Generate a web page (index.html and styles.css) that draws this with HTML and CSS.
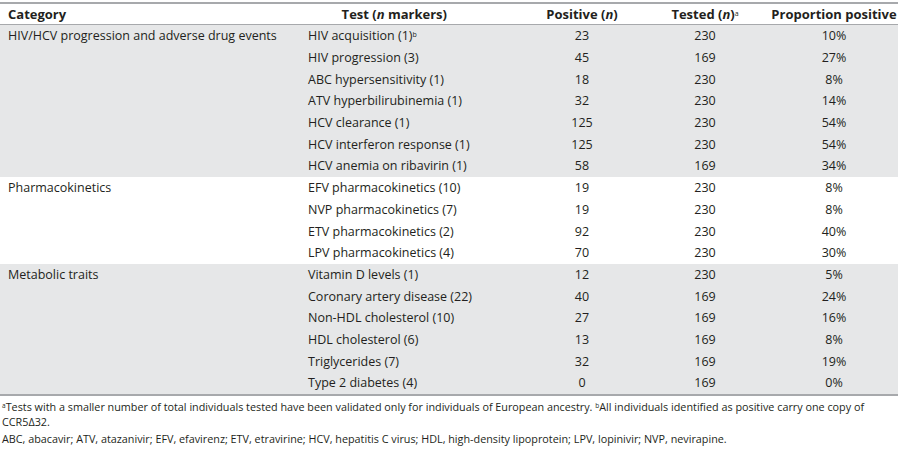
FILE: index.html
```html
<!DOCTYPE html>
<html>
<head>
<meta charset="utf-8">
<link rel="stylesheet" href="styles.css">
</head>
<body>
<table class="data">
  <colgroup>
    <col class="c1"><col class="c2"><col class="c3"><col class="c4"><col class="c5">
  </colgroup>
  <thead>
    <tr>
      <th class="left">Category</th>
      <th class="test-h">Test (<i>n</i> markers)</th>
      <th>Positive (<i>n</i>)</th>
      <th>Tested (<i>n</i>)<sup>a</sup></th>
      <th class="prop">Proportion positive</th>
    </tr>
  </thead>
  <tbody class="shaded">
    <tr><td class="left">HIV/HCV progression and adverse drug events</td><td class="test">HIV acquisition (1)<sup>b</sup></td><td>23</td><td>230</td><td class="prop">10%</td></tr>
    <tr><td></td><td class="test">HIV progression (3)</td><td>45</td><td>169</td><td class="prop">27%</td></tr>
    <tr><td></td><td class="test">ABC hypersensitivity (1)</td><td>18</td><td>230</td><td class="prop">8%</td></tr>
    <tr><td></td><td class="test">ATV hyperbilirubinemia (1)</td><td>32</td><td>230</td><td class="prop">14%</td></tr>
    <tr><td></td><td class="test">HCV clearance (1)</td><td>125</td><td>230</td><td class="prop">54%</td></tr>
    <tr><td></td><td class="test">HCV interferon response (1)</td><td>125</td><td>230</td><td class="prop">54%</td></tr>
    <tr><td></td><td class="test">HCV anemia on ribavirin (1)</td><td>58</td><td>169</td><td class="prop">34%</td></tr>
  </tbody>
  <tbody>
    <tr><td class="left">Pharmacokinetics</td><td class="test">EFV pharmacokinetics (10)</td><td>19</td><td>230</td><td class="prop">8%</td></tr>
    <tr><td></td><td class="test">NVP pharmacokinetics (7)</td><td>19</td><td>230</td><td class="prop">8%</td></tr>
    <tr><td></td><td class="test">ETV pharmacokinetics (2)</td><td>92</td><td>230</td><td class="prop">40%</td></tr>
    <tr><td></td><td class="test">LPV pharmacokinetics (4)</td><td>70</td><td>230</td><td class="prop">30%</td></tr>
  </tbody>
  <tbody class="shaded last">
    <tr><td class="left">Metabolic traits</td><td class="test">Vitamin D levels (1)</td><td>12</td><td>230</td><td class="prop">5%</td></tr>
    <tr><td></td><td class="test">Coronary artery disease (22)</td><td>40</td><td>169</td><td class="prop">24%</td></tr>
    <tr><td></td><td class="test">Non-HDL cholesterol (10)</td><td>27</td><td>169</td><td class="prop">16%</td></tr>
    <tr><td></td><td class="test">HDL cholesterol (6)</td><td>13</td><td>169</td><td class="prop">8%</td></tr>
    <tr><td></td><td class="test">Triglycerides (7)</td><td>32</td><td>169</td><td class="prop">19%</td></tr>
    <tr><td></td><td class="test">Type 2 diabetes (4)</td><td>0</td><td>169</td><td class="prop">0%</td></tr>
  </tbody>
</table>
<div class="notes">
  <p class="note1"><sup>a</sup>Tests with a smaller number of total individuals tested have been validated only for individuals of European ancestry. <sup>b</sup>All individuals identified as positive carry one copy of<br>CCR5Δ32.</p>
  <p class="note2">ABC, abacavir; ATV, atazanivir; EFV, efavirenz; ETV, etravirine; HCV, hepatitis C virus; HDL, high-density lipoprotein; LPV, lopinivir; NVP, nevirapine.</p>
</div>
</body>
</html>
```
FILE: styles.css
```css
html, body {
  margin: 0;
  padding: 0;
  background: #ffffff;
}
body {
  font-family: "Open Sans", "Noto Sans", sans-serif;
  color: #231f20;
  width: 900px;
}
.data {
  width: 898px;
  border-collapse: collapse;
  table-layout: fixed;
  margin-top: 2px;
  border-top: 2px solid #a7a9ac;
  font-size: 12.5px;
}
.c1 { width: 300px; }
.c2 { width: 212px; }
.c3 { width: 140px; }
.c4 { width: 106px; }
.c5 { width: 140px; }
th {
  font-size: 13px;
  font-weight: 700;
  text-align: center;
  height: 20px;
  padding: 0;
  border-bottom: 1px solid #a7a9ac;
  white-space: nowrap;
}
td {
  text-align: center;
  height: 21.7px;
  padding: 0;
  white-space: nowrap;
}
.left { text-align: left; padding-left: 8px; }
.test { text-align: left; padding-left: 8px; }
.test-h { text-align: right; padding-right: 65px; }
.prop { padding-left: 12px; }
sup {
  font-size: 7px;
  line-height: 0;
  vertical-align: 0.42em;
  font-weight: 400;
}
.shaded { background: #e6e7e8; }
.last tr:last-child td { border-bottom: 2px solid #a7a9ac; }
.notes {
  font-size: 10.8px;
  line-height: 15px;
  padding: 0 2px;
}
.notes p { margin: 0; }
.note1 { padding-top: 3px; }
.note2 { padding-top: 2px; }
.notes sup { font-size: 6.5px; vertical-align: 0.45em; }
```
